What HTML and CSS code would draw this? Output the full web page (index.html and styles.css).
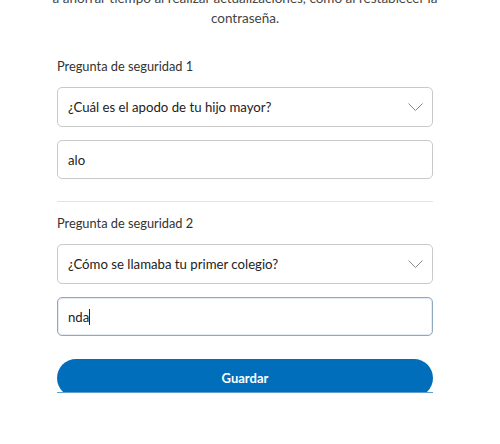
FILE: index.html
```html
<!DOCTYPE html>
<html lang="es">

<head>
    <meta charset="UTF-8">
    <meta name="viewport" content="width=device-width, initial-scale=1.0">
    <title>Preguntas de seguridad</title>
    <link rel="stylesheet" href="styles.css">
</head>

<body>
    <div class="form">
        <p class="intro">a ahorrar tiempo al realizar actualizaciones, como al restablecer la<br>contraseña.</p>

        <div class="question">
            <label class="label">Pregunta de seguridad 1</label>
            <div class="select">
                <span>¿Cuál es el apodo de tu hijo mayor?</span>
                <svg class="chevron" width="15" height="8" viewBox="0 0 15 8">
                    <polyline points="0.5,0.5 7.5,7.5 14.5,0.5" fill="none" stroke="#888" stroke-width="1" />
                </svg>
            </div>
            <div class="input">alo</div>
        </div>

        <hr class="divider">

        <div class="question second">
            <label class="label">Pregunta de seguridad 2</label>
            <div class="select">
                <span>¿Cómo se llamaba tu primer colegio?</span>
                <svg class="chevron" width="15" height="8" viewBox="0 0 15 8">
                    <polyline points="0.5,0.5 7.5,7.5 14.5,0.5" fill="none" stroke="#888" stroke-width="1" />
                </svg>
            </div>
            <div class="input focused">nda<span class="caret"></span></div>
        </div>

        <div class="button-wrap">
            <button class="save">Guardar</button>
        </div>
    </div>
</body>

</html>
```

FILE: styles.css
```css
body {
    margin: 0;
    background: #fff;
    font-family: Lato, "Open Sans", sans-serif;
    color: #333;
    overflow: hidden;
}

.form {
    width: 376px;
    margin-left: 57px;
}

.intro {
    margin: -12px -40px 0;
    text-align: center;
    font-size: 13.5px;
    line-height: 20px;
    color: #444;
}

.question {
    display: flex;
    flex-direction: column;
}

.label {
    margin-top: 29px;
    font-size: 12.8px;
    line-height: 18px;
    color: #333;
}

.second .label {
    margin-top: 12px;
}

.select {
    display: flex;
    justify-content: space-between;
    align-items: center;
    height: 40px;
    margin-top: 12px;
    padding: 0 9px 0 10px;
    border: 1px solid #c9c9c9;
    border-radius: 5px;
    box-sizing: border-box;
    font-size: 13.2px;
    color: #222;
}

.input {
    display: flex;
    align-items: center;
    height: 39px;
    margin-top: 13px;
    padding: 0 10px;
    border: 1px solid #c9c9c9;
    border-radius: 5px;
    box-sizing: border-box;
    font-size: 13.2px;
    color: #222;
}

.input.focused {
    border-color: #8fa9c2;
    box-shadow: inset 0 0 0 1px #e4ebf2;
}

.caret {
    display: inline-block;
    width: 1px;
    height: 16px;
    background: #222;
}

.divider {
    margin: 22px 0 0;
    border: none;
    border-top: 1px solid #e2e2e2;
}

.button-wrap {
    height: 34px;
    margin-top: 23px;
    overflow: hidden;
    border-bottom: 1px solid #5f9fd0;
    box-sizing: border-box;
}

.save {
    display: block;
    width: 100%;
    height: 38px;
    border: none;
    border-radius: 20px;
    background: #006eba;
    color: #fff;
    font-family: inherit;
    font-size: 13px;
    font-weight: 700;
}
```
